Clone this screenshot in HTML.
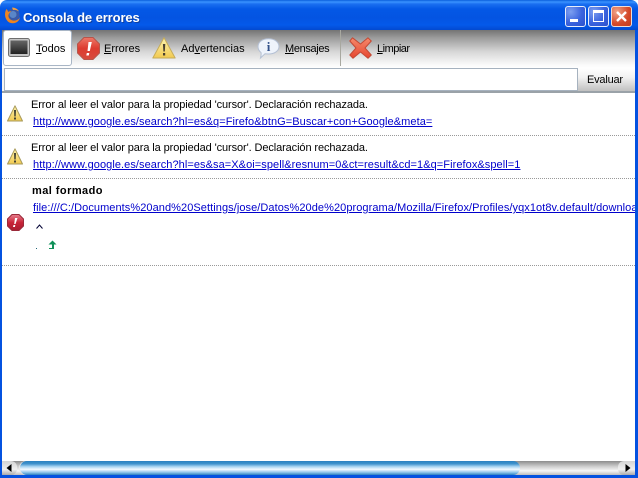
<!DOCTYPE html>
<html><head><meta charset="utf-8">
<style>
html,body{margin:0;padding:0;width:638px;height:478px;overflow:hidden;background:#fff;font-family:"Liberation Sans",sans-serif;font-size:11px;color:#000}
.a{position:absolute;white-space:nowrap}
svg{position:absolute;overflow:visible}
.msg{letter-spacing:-.1px}
.lnk{color:#0000cc;text-decoration:underline;letter-spacing:.07px}
.dot{position:absolute;left:2px;width:633px;height:1px;background-image:linear-gradient(90deg,#999 1px,transparent 1px);background-size:2px 1px}
.wb{position:absolute;top:6px;width:19px;height:19px;border:1px solid #e6edfb;border-radius:3px;background:radial-gradient(circle at 25% 25%,#7d9ff0,#3a63de 55%,#2a50cc)}
</style></head><body>
<svg width="0" height="0" style="left:0;top:0"><defs>
<linearGradient id="wg" x1="0" y1="0" x2="0" y2="1"><stop offset="0" stop-color="#fdf3b0"/><stop offset="1" stop-color="#f2ca50"/></linearGradient>
<linearGradient id="rg" x1="0" y1="0" x2="0" y2="1"><stop offset="0" stop-color="#ee7868"/><stop offset=".5" stop-color="#dc3c30"/><stop offset="1" stop-color="#d84a3c"/></linearGradient>
<linearGradient id="dg" x1="0" y1="0" x2="0" y2="1"><stop offset="0" stop-color="#e88090"/><stop offset=".5" stop-color="#c82438"/><stop offset="1" stop-color="#a81c30"/></linearGradient>
<linearGradient id="sg" x1="0" y1="0" x2="0" y2="1"><stop offset="0" stop-color="#666"/><stop offset="1" stop-color="#222"/></linearGradient>
<linearGradient id="xg" x1="0" y1="0" x2="0" y2="1"><stop offset="0" stop-color="#f58a6c"/><stop offset="1" stop-color="#e6452e"/></linearGradient>
</defs></svg>
<!-- title bar -->
<div class="a" style="left:0;top:0;width:638px;height:30px;background:linear-gradient(180deg,#0a5fdc 0,#3a93ff 2px,#1a6ff0 4px,#0458e6 9px,#0454e2 18px,#0459ea 25px,#0349d0 30px);border-radius:7px 7px 0 0"></div>
<div class="a" style="left:23px;top:10px;font-size:13px;font-weight:bold;color:#fff;text-shadow:1px 1px 0 #0f3fa0;letter-spacing:-.1px">Consola de errores</div>
<svg style="left:4px;top:7px" width="17" height="17" viewBox="0 0 17 17"><circle cx="9" cy="8" r="6.500" fill="#3a5aa8"/><circle cx="9" cy="7.500" r="3.500" fill="#5a86c8"/><path d="M2.500 2C0 6 .5 13 6 15.800C11 17.500 15.500 14.500 16 10C15 12.500 12 14 9 13.500C6 13 4 10.500 4.500 8C5 6 6.500 5.500 7 4C6 4 5 4.500 4 5C4 4 3.500 3 2.500 2Z" fill="#ee8420"/><path d="M8 .5C11 .5 14 2 15 4.500C13 3 11 2.500 9 3Z" fill="#f2a040"/></svg>
<!-- window buttons -->
<div class="wb" style="left:565px"></div>
<div class="a" style="left:570px;top:19px;width:8px;height:3px;background:#fff"></div>
<div class="wb" style="left:588px"></div>
<div class="a" style="left:593px;top:10px;width:9px;height:8px;border:1px solid #fff;border-top-width:3px"></div>
<div class="wb" style="left:611px;border-color:#f0dcd6;background:radial-gradient(circle at 25% 25%,#f0a488,#d4492a 60%,#c23c1e)"></div>
<svg style="left:611px;top:6px" width="21" height="21"><path d="M6 6L15 15M15 6L6 15" stroke="#fff" stroke-width="2.400"/></svg>
<!-- toolbar -->
<div class="a" style="left:0;top:30px;width:638px;height:38px;background:linear-gradient(180deg,#737373 0,#9c9c9c 8px,#d8d8d8 22px,#f8f8f8 34px,#fff 38px)"></div>
<div class="a" style="left:3px;top:30px;width:67px;height:34px;background:#fff;border:1px solid #a9b6c6;border-radius:3px"></div>
<svg style="left:8px;top:38px" width="22" height="19"><rect x=".5" y=".5" width="21" height="18" rx="2" fill="#c4c4c4" stroke="#6e6e6e"/><rect x="2.500" y="2.500" width="17" height="13.500" fill="url(#sg)"/></svg>
<div class="a" style="left:36px;top:43px"><u>T</u>odos</div>
<svg style="left:77px;top:37px" width="23" height="23" viewBox="0 0 23 23"><path d="M7 .5H16L22.500 7V16L16 22.500H7L.5 16V7Z" fill="url(#rg)" stroke="#b8554a"/><path d="M11.500 5h3.300l-2 9h-2.300zM9.800 16h2.500l-.5 2.500H9.300z" fill="#fff"/></svg>
<div class="a" style="left:104px;top:43px"><u>E</u>rrores</div>
<svg style="left:152px;top:37px" width="24" height="22" viewBox="0 0 24 22"><path d="M12 .8L23.200 21H.8Z" fill="url(#wg)" stroke="#c6ac58" stroke-linejoin="round"/><path d="M10.900 7h2.400l-.5 7.500h-1.400zM11 16h2.200v2.500H11z" fill="#4a4030"/></svg>
<div class="a" style="left:181px;top:43px">Ad<u>v</u>ertencias</div>
<svg style="left:257px;top:38px" width="23" height="21" viewBox="0 0 23 21"><path d="M11.500 .8C17.500 .8 22 4 22 8.500S17.500 16 11.500 16C10 16 9 16 8 15.800L3.500 20C4 18 4.500 16 4 14.500C2 13 1 11 1 8.500C1 4 5.500 .8 11.500 .8Z" fill="#eef3fb" stroke="#b4c0d4"/><text x="11.500" y="13" text-anchor="middle" font-family="Liberation Serif" font-weight="bold" font-size="13" fill="#33518a">i</text></svg>
<div class="a" style="left:285px;top:43px;letter-spacing:-.35px"><u>M</u>ensajes</div>
<div class="a" style="left:340px;top:30px;width:1px;height:36px;background:#a8a8a0"></div>
<svg style="left:349px;top:37px" width="23" height="22" viewBox="0 0 23 22"><path d="M3.500 .8L11.500 7L19 .8L22.300 4L16 11L22.300 18L19 21.300L11.500 15L4 21.300L.8 18L7 11L.8 4Z" fill="url(#xg)" stroke="#c24a36" stroke-linejoin="round"/></svg>
<div class="a" style="left:377px;top:43px;letter-spacing:-.5px"><u>L</u>impiar</div>
<!-- input row -->
<div class="a" style="left:0;top:68px;width:638px;height:23px;background:#f4f4f4"></div>
<div class="a" style="left:578px;top:68px;width:60px;height:23px;background:linear-gradient(180deg,#fff,#f2f2f2 40%,#c0c0c0)"></div>
<div class="a" style="left:4px;top:68px;width:574px;height:23px;background:#fff;border:1px solid #a6b2bf;box-sizing:border-box"></div>
<div class="a" style="left:587px;top:74px;letter-spacing:-.2px">Evaluar</div>
<div class="a" style="left:0;top:91px;width:638px;height:2px;background:#9aa2a8"></div>
<!-- content -->
<svg style="left:7px;top:105px" width="16" height="17" viewBox="0 0 16 17"><path d="M8 .8L15.500 16H.5Z" fill="url(#wg)" stroke="#a89a5a" stroke-linejoin="round"/><path d="M7 5h2l-.3 6.500H7.300zM7 12.500h2v2H7z" fill="#443"/></svg>
<div class="a msg" style="left:31px;top:99px">Error al leer el valor para la propiedad 'cursor'. Declaración rechazada.</div>
<div class="a lnk" style="left:33px;top:116px">http://www.google.es/search?hl=es&amp;q=Firefo&amp;btnG=Buscar+con+Google&amp;meta=</div>
<div class="dot" style="top:135px"></div>
<svg style="left:7px;top:148px" width="16" height="17" viewBox="0 0 16 17"><path d="M8 .8L15.500 16H.5Z" fill="url(#wg)" stroke="#a89a5a" stroke-linejoin="round"/><path d="M7 5h2l-.3 6.500H7.300zM7 12.500h2v2H7z" fill="#443"/></svg>
<div class="a msg" style="left:31px;top:142px">Error al leer el valor para la propiedad 'cursor'. Declaración rechazada.</div>
<div class="a lnk" style="left:33px;top:159px">http://www.google.es/search?hl=es&amp;sa=X&amp;oi=spell&amp;resnum=0&amp;ct=result&amp;cd=1&amp;q=Firefox&amp;spell=1</div>
<div class="dot" style="top:178px"></div>
<div class="a" style="left:32px;top:185px;font-weight:bold;letter-spacing:.45px">mal formado</div>
<div class="a lnk" style="left:33px;top:202px;width:602px;overflow:hidden">file:///C:/Documents%20and%20Settings/jose/Datos%20de%20programa/Mozilla/Firefox/Profiles/yqx1ot8v.default/downloads/</div>
<svg style="left:7px;top:214px" width="17" height="17" viewBox="0 0 17 17"><path d="M5 .5H12L16.500 5V12L12 16.500H5L.5 12V5Z" fill="url(#dg)" stroke="#9a2a3a"/><path d="M8 4h2.500L8.500 10H7.200zM6.500 11h1.800l-.4 2H6z" fill="#fff"/></svg>
<svg style="left:36px;top:224px" width="8" height="6"><path d="M.5 4.500L3.500 1L6.500 4.500" fill="none" stroke="#003" stroke-width="1"/></svg>
<div class="a" style="left:36px;top:248px;width:1px;height:1px;background:#267"></div>
<svg style="left:48px;top:240px" width="9" height="10"><path d="M4.500 .5L8.500 4.500H6V9H1V8H4V4.500H.5Z" fill="#0f9058"/></svg>
<div class="dot" style="top:265px"></div>
<!-- scrollbar -->
<div class="a" style="left:0;top:461px;width:638px;height:14px;background:linear-gradient(180deg,#8c8c8c,#cfcfcf 40%,#f6f6f6 70%,#bdbdbd)"></div>
<div class="a" style="left:2px;top:461px;width:15px;height:14px;background:linear-gradient(180deg,#d4d4d4,#f0f0f0 60%,#aaa);border-radius:0 6px 6px 0"></div>
<svg style="left:6px;top:464px" width="7" height="8"><path d="M5.500 0V8L.5 4Z" fill="#000"/></svg>
<div class="a" style="left:618px;top:461px;width:17px;height:14px;background:linear-gradient(180deg,#d4d4d4,#f0f0f0 60%,#aaa);border-radius:6px 0 0 6px"></div>
<svg style="left:625px;top:464px" width="7" height="8"><path d="M.5 0V8L5.500 4Z" fill="#000"/></svg>
<div class="a" style="left:20px;top:461px;width:500px;height:14px;box-sizing:border-box;border-radius:7px;background:linear-gradient(180deg,#2a80c0,#3f92cc 20%,#a8d4f2 40%,#f4faff 60%,#8cc4ea 82%,#2a80c0);box-shadow:-1px 0 0 #e8e8e8"></div>
<!-- borders -->
<div class="a" style="left:0;top:30px;width:2px;height:448px;background:#0452e0"></div>
<div class="a" style="left:635px;top:30px;width:3px;height:448px;background:#0452e0"></div>
<div class="a" style="left:0;top:475px;width:638px;height:3px;background:#0452e0"></div>
</body></html>
